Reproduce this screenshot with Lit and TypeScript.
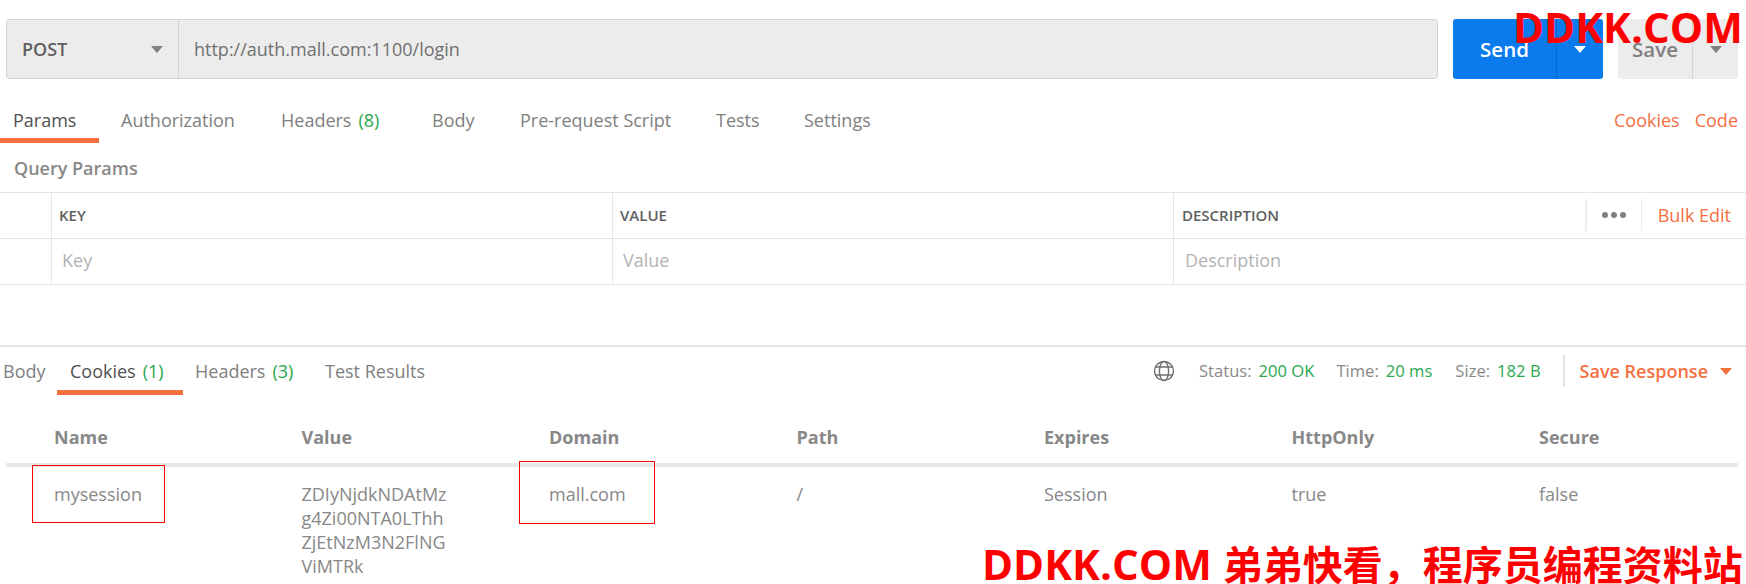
import { LitElement, html, css } from "lit";
import { customElement } from "lit/decorators.js";

const caret = (cls: string) => html`<span class="caret ${cls}"></span>`;

@customElement("app-root")
export class AppRoot extends LitElement {
  static styles = css`
    :host { display: block; position: relative; width: 1746px; height: 584px; overflow: hidden; background: #fff;
      font-family: "Open Sans", sans-serif; font-size: 18px; line-height: 24px; color: #888; }
    * { box-sizing: border-box; }
    .caret { display: block; width: 0; height: 0; border-left: 6px solid transparent; border-right: 6px solid transparent; border-top: 7px solid #808080; }
    .caret.white { border-top-color: #fff; }
    .caret.orange { border-top-color: #f4703f; }

    .bar { display: flex; height: 60px; margin: 19px 8px 0 6px; }
    .url-box { flex: 1; display: flex; background: #ececec; border: 1px solid #d4d4d4; border-radius: 3px; margin-right: 15px; }
    .method { width: 172px; flex: none; display: flex; align-items: center; justify-content: space-between; padding: 0 15px; border-right: 1px solid #d4d4d4; font-weight: 600; color: #5f5f5f; }
    .url { flex: 1; display: flex; align-items: center; padding-left: 15px; color: #707070; }
    .btn { display: flex; height: 60px; border-radius: 3px; font-size: 20.5px; font-weight: 600; }
    .btn .main { display: flex; align-items: center; justify-content: center; }
    .btn .drop { display: flex; align-items: center; justify-content: center; }
    .send { width: 150px; background: #097bed; color: #fff; margin-right: 15px; }
    .send .main { width: 104px; border-right: 1px solid #0868c9; }
    .send .drop { flex: 1; }
    .save { width: 120px; background: #ececec; color: #808080; }
    .save .main { width: 75px; border-right: 1px solid #d4d4d4; }
    .save .drop { flex: 1; }

    .tabs { display: flex; align-items: stretch; }
    .req-tabs { height: 44px; margin-top: 20px; padding-right: 8px; }
    .tab { position: relative; display: flex; align-items: flex-start; white-space: nowrap; color: #808080; }
    .count { color: #2aa84f; margin-left: 7px; }
    .active { color: #505050; }
    .active::after { content: ""; position: absolute; bottom: 0; height: 5px; background: #f4703f; }
    .req-tabs .tab { padding-top: 9px; }
    .req-tabs .t0 { width: 121px; padding-left: 13px; }
    .req-tabs .t0::after { left: 0; width: 99px; }
    .req-tabs .t1 { width: 160px; }
    .req-tabs .t2 { width: 151px; }
    .req-tabs .t3 { width: 88px; }
    .req-tabs .t4 { width: 196px; }
    .req-tabs .t5 { width: 88px; }
    .links { margin-left: auto; display: flex; gap: 15px; padding-top: 9px; color: #f4703f; }

    .qp { height: 49px; padding: 13px 0 0 14px; font-weight: 600; color: #888; }
    .ptable { border-top: 1px solid #e5e5e5; }
    .prow { display: grid; grid-template-columns: 52px 561px 561px 1fr; height: 46px; border-bottom: 1px solid #e5e5e5; }
    .prow > div { display: flex; align-items: center; border-right: 1px solid #e5e5e5; }
    .prow > div:last-child { border-right: 0; }
    .prow.head > div { font-size: 15px; font-weight: 600; color: #5f5f5f; padding: 0 0 2px 7px; }
    .prow.head > div:first-child { padding: 0; }
    .prow.head > div:last-child { padding-left: 8px; }
    .prow.body > div { color: #b3b3b3; padding: 0 0 3px 10px; }
    .prow.body > div:last-child { padding-left: 11px; }
    .desc-head { justify-content: space-between; }
    .tools { display: flex; align-items: center; height: 100%; }
    .dots { display: flex; gap: 3px; padding: 0 15px; height: 32px; align-items: center; border-left: 2px solid #ececec; border-right: 1px solid #ececec; }
    .dots i { width: 6px; height: 6px; border-radius: 50%; background: #808080; }
    .bulk { color: #f4703f; font-weight: 400; font-size: 18px; padding: 0 15px 0 16px; }

    .response { margin-top: 60px; border-top: 2px solid #e5e5e5; }
    .res-head { height: 48px; display: flex; }
    .res-tabs .tab { padding-top: 12px; }
    .res-tabs .r0 { width: 57px; padding-left: 3px; }
    .res-tabs .r1 { width: 126px; padding-left: 13px; margin-right: 12px; }
    .res-tabs .r1::after { left: 0; right: 0; }
    .res-tabs .r2 { width: 130px; }
    .meta { margin-left: auto; display: flex; align-items: center; font-size: 16.6px; height: 32px; margin-top: 8px; padding-right: 14px; }
    .globe { width: 22px; height: 22px; margin-right: 24px; color: #6f6f6f; }
    .m { margin-right: 22px; white-space: nowrap; }
    .m.time { margin-right: 23px; }
    .m b { font-weight: 400; color: #2aa84f; margin-left: 7px; }
    .save-resp { display: flex; align-items: center; gap: 12px; height: 32px; border-left: 2px solid #e5e5e5; padding-left: 15px; color: #f4703f; font-weight: 600; font-size: 18px; }
    .cookies { margin: 0 8px 0 6px; }
    .crow { display: grid; grid-template-columns: repeat(7, 247.5px); padding-left: 48px; }
    .chead { height: 72px; padding-top: 30px; border-bottom: 4px solid #e8e8e8; font-weight: 700; }
    .cbody { padding-top: 15px; }
    .val { white-space: nowrap; }

    .mark { position: absolute; white-space: nowrap; color: #f00; font-family: "Open Sans", "Noto Sans CJK SC", sans-serif; font-weight: 700; font-size: 42px; line-height: 54px; }
    .mark span { font-family: "Noto Sans CJK SC", sans-serif; font-size: 40px; }
    .m1 { left: 1513px; top: 0; }
    .m2 { left: 982px; top: 536px; }
    .redbox { position: absolute; border: 1px solid #f00; }
    .b1 { left: 32px; top: 465px; width: 133px; height: 58px; }
    .b2 { left: 519px; top: 461px; width: 136px; height: 63px; }
  `;

  render() {
    return html`
      <div class="bar">
        <div class="url-box">
          <div class="method"><span>POST</span>${caret("")}</div>
          <div class="url">http://auth.mall.com:1100/login</div>
        </div>
        <div class="btn send"><div class="main">Send</div><div class="drop">${caret("white")}</div></div>
        <div class="btn save"><div class="main">Save</div><div class="drop">${caret("")}</div></div>
      </div>

      <div class="tabs req-tabs">
        <div class="tab t0 active">Params</div>
        <div class="tab t1">Authorization</div>
        <div class="tab t2">Headers<span class="count">(8)</span></div>
        <div class="tab t3">Body</div>
        <div class="tab t4">Pre-request Script</div>
        <div class="tab t5">Tests</div>
        <div class="tab">Settings</div>
        <div class="links"><span>Cookies</span><span>Code</span></div>
      </div>

      <div class="qp">Query Params</div>
      <div class="ptable">
        <div class="prow head">
          <div></div><div>KEY</div><div>VALUE</div>
          <div class="desc-head"><span>DESCRIPTION</span>
            <div class="tools"><div class="dots"><i></i><i></i><i></i></div><span class="bulk">Bulk Edit</span></div>
          </div>
        </div>
        <div class="prow body"><div></div><div>Key</div><div>Value</div><div>Description</div></div>
      </div>

      <div class="response">
        <div class="res-head">
          <div class="tabs res-tabs">
            <div class="tab r0">Body</div>
            <div class="tab r1 active">Cookies<span class="count">(1)</span></div>
            <div class="tab r2">Headers<span class="count">(3)</span></div>
            <div class="tab">Test Results</div>
          </div>
          <div class="meta">
            <svg class="globe" viewBox="0 0 22 22" fill="none" stroke="currentColor" stroke-width="1.4">
              <circle cx="11" cy="11" r="9.5"></circle>
              <ellipse cx="11" cy="11" rx="4.6" ry="9.5"></ellipse>
              <path d="M2.5 7h17M2.5 15h17"></path>
            </svg>
            <span class="m">Status:<b>200 OK</b></span>
            <span class="m time">Time:<b>20 ms</b></span>
            <span class="m">Size:<b>182 B</b></span>
            <div class="save-resp"><span>Save Response</span>${caret("orange")}</div>
          </div>
        </div>
        <div class="cookies">
          <div class="crow chead"><div>Name</div><div>Value</div><div>Domain</div><div>Path</div><div>Expires</div><div>HttpOnly</div><div>Secure</div></div>
          <div class="crow cbody">
            <div>mysession</div>
            <div class="val">ZDIyNjdkNDAtMz<br />g4Zi00NTA0LThh<br />ZjEtNzM3N2FlNG<br />ViMTRk</div>
            <div>mall.com</div><div>/</div><div>Session</div><div>true</div><div>false</div>
          </div>
        </div>
      </div>

      <div class="redbox b1"></div>
      <div class="redbox b2"></div>
      <div class="mark m1">DDKK.COM</div>
      <div class="mark m2">DDKK.COM <span>弟弟快看，程序员编程资料站</span></div>
    `;
  }
}
